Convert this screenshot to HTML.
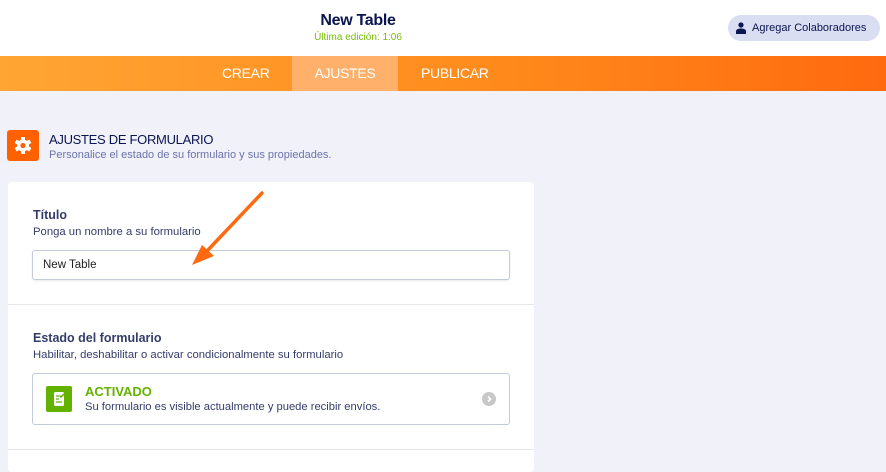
<!DOCTYPE html>
<html><head><meta charset="utf-8"><style>
*{margin:0;padding:0;box-sizing:border-box}
body{width:886px;height:458px;overflow:hidden;background:#f1f1fa;font-family:"Liberation Sans",sans-serif;position:relative}
.top{position:absolute;left:0;top:0;width:886px;height:56px;background:#fff}
.t1{position:absolute;left:0;width:716px;text-align:center;top:12px;font-size:16px;font-weight:bold;color:#0a1551;letter-spacing:-0.3px}
.t2{position:absolute;left:0;width:716px;text-align:center;top:32px;font-size:10px;color:#78bb07}
.collab{position:absolute;left:728px;top:15px;width:152px;height:26px;border-radius:13px;background:#dadef3;font-size:11px;color:#0a1551;line-height:26px;padding-left:24px}
.nav{position:absolute;left:0;top:56px;width:886px;height:35px;background:linear-gradient(90deg,#ffa534,#ff8b1c 55%,#ff6a0f)}
.nav span{position:absolute;top:0;height:35px;line-height:35px;color:#fff;font-size:14px;letter-spacing:-0.3px}
.sel{background:#ffb06a;left:292px;width:106px;text-align:center}
.gear{position:absolute;left:7px;top:130px;width:32px;height:31px;background:#ff6100;border-radius:3px}
.h1{position:absolute;left:49px;top:132px;font-size:13px;color:#0a1551;letter-spacing:-0.3px}
.h2{position:absolute;left:49px;top:149px;font-size:11px;color:#6c73a8}
.card{position:absolute;left:8px;top:182px;width:526px;height:290px;background:#fff;border-radius:4px}
.div{position:absolute;left:8px;width:526px;height:1px;background:#e6e6ee}
.lbl{position:absolute;left:33px;font-size:12.5px;font-weight:bold;color:#343c6a}
.sub{position:absolute;left:33px;font-size:11.3px;color:#343c6a}
.inp{position:absolute;left:32px;top:250px;width:478px;height:30px;border:1px solid #c3cad8;border-radius:3px;font-size:11.5px;color:#222;line-height:28px;padding-left:10px;box-shadow:0 1px 2px rgba(0,0,0,.08)}
.box{position:absolute;left:32px;top:373px;width:478px;height:52px;border:1px solid #c3cad8;border-radius:3px}
</style></head><body>
<div class="top">
<div class="t1">New Table</div>
<div class="t2">Última edición: 1:06</div>
<div class="collab"><svg style="position:absolute;left:8px;top:7px" width="10" height="12" viewBox="0 0 10 12"><circle cx="5" cy="3" r="2.6" fill="#0a1551"/><path d="M0 12v-2.5C0 7.5 2 6.5 5 6.5s5 1 5 3V12z" fill="#0a1551"/></svg>Agregar Colaboradores</div>
</div>
<div class="nav"><span style="left:222px">CREAR</span><span class="sel">AJUSTES</span><span style="left:421px">PUBLICAR</span></div>
<div class="gear"><svg width="32" height="31" viewBox="0 0 32 31"><g fill="#fff" transform="translate(16 15.5)"><circle r="6"/><rect x="-2" y="-8.5" width="4" height="17"/><rect x="-2" y="-8.5" width="4" height="17" transform="rotate(60)"/><rect x="-2" y="-8.5" width="4" height="17" transform="rotate(120)"/></g><circle cx="16" cy="15.5" r="2.6" fill="#ff6100"/></svg></div>
<div class="h1">AJUSTES DE FORMULARIO</div>
<div class="h2">Personalice el estado de su formulario y sus propiedades.</div>
<div class="card"></div>
<div class="lbl" style="top:208px">Título</div>
<div class="sub" style="top:226px">Ponga un nombre a su formulario</div>
<div class="inp">New Table</div>
<div class="div" style="top:304px"></div>
<div class="lbl" style="top:331px">Estado del formulario</div>
<div class="sub" style="top:349px">Habilitar, deshabilitar o activar condicionalmente su formulario</div>
<div class="box">
<div style="position:absolute;left:13px;top:12px;width:26px;height:26px;background:#64b200;border-radius:2px"><svg width="26" height="26" viewBox="0 0 26 26"><rect x="8" y="6" width="10" height="14" rx="1.5" fill="#fff"/><path d="M10 10h3M10 13h3M10 16h6" stroke="#64b200" stroke-width="1.2"/><path d="M13.5 9.5l1.5 1.5 3-3" stroke="#64b200" stroke-width="1.5" fill="none"/></svg></div>
<div style="position:absolute;left:52px;top:10px;font-size:13px;font-weight:bold;color:#64b200">ACTIVADO</div>
<div style="position:absolute;left:52px;top:27px;font-size:11.2px;color:#343c6a">Su formulario es visible actualmente y puede recibir envíos.</div>
<div style="position:absolute;left:449px;top:18px;width:14px;height:14px;border-radius:7px;background:#c8c8c8"><svg width="14" height="14" viewBox="0 0 14 14"><path d="M6 4.5l2.5 2.5L6 9.5" stroke="#fff" stroke-width="1.6" fill="none"/></svg></div>
</div>
<div class="div" style="top:449px"></div>
<svg style="position:absolute;left:0;top:0" width="886" height="458"><path d="M262 193L207 251" stroke="#ff6a10" stroke-width="3.5" stroke-linecap="round"/><path d="M192 265l22-9-12-11z" fill="#ff6a10"/></svg>
</body></html>
